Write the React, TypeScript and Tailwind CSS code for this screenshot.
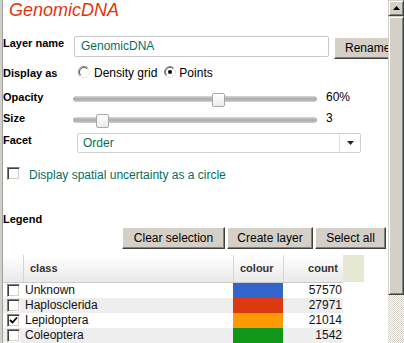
import React from "react";

const btn =
  "bg-[#d4d0c8] border border-t-white border-l-white border-r-[#404040] border-b-[#404040] shadow-[inset_-1px_-1px_0_#808080] text-[12px] text-black";

const sunken =
  "bg-white border border-t-[#808080] border-l-[#808080] border-b-white border-r-white shadow-[inset_1px_1px_0_#404040,inset_-1px_-1px_0_#d4d0c8]";

function Radio({ checked }: { checked?: boolean }) {
  return (
    <svg width="12" height="12" viewBox="0 0 12 12" className="shrink-0">
      <circle cx="6" cy="6" r="5.5" fill="white" />
      <path d="M2.1 9.9 A5.5 5.5 0 0 1 9.9 2.1" stroke="#808080" fill="none" />
      <path d="M2.8 9.2 A4.5 4.5 0 0 1 9.2 2.8" stroke="#404040" fill="none" strokeWidth="0.8" />
      <path d="M9.9 2.1 A5.5 5.5 0 0 1 2.1 9.9" stroke="#e4e4e4" fill="none" />
      {checked && <circle cx="6" cy="6" r="2" fill="black" />}
    </svg>
  );
}

function Check({ checked }: { checked?: boolean }) {
  return (
    <div className={`w-[13px] h-[13px] shrink-0 ${sunken} flex items-center justify-center`}>
      {checked && (
        <svg width="9" height="9" viewBox="0 0 9 9">
          <path d="M1 4 L3.5 6.5 L8 1.5" stroke="black" strokeWidth="1.8" fill="none" />
        </svg>
      )}
    </div>
  );
}

function Slider({ left }: { left: number }) {
  return (
    <div className="relative w-[244px] h-[18px] shrink-0">
      <div className="absolute left-0 right-0 top-[6px] h-[6px] rounded-full bg-linear-to-b from-[#d8d8d8] via-[#a9a9a9] to-[#cfcfcf]" />
      <div
        className="absolute top-[3px] w-[13px] h-[14px] rounded-[2px] border border-[#a8a8a8] bg-linear-to-b from-white to-[#ececec]"
        style={{ left }}
      />
    </div>
  );
}

const rows = [
  { name: "Unknown", color: "bg-[#3366cc]", count: "57570", checked: false, alt: false },
  { name: "Haplosclerida", color: "bg-[#dc3912]", count: "27971", checked: false, alt: true },
  { name: "Lepidoptera", color: "bg-[#ff9900]", count: "21014", checked: true, alt: false },
  { name: "Coleoptera", color: "bg-[#109618]", count: "1542", checked: false, alt: true },
];

export default function App() {
  const teal = "text-[#006f62]";
  return (
    <div className="flex w-[404px] h-[343px] overflow-hidden bg-white font-[family-name:'Liberation_Sans',Arial,sans-serif] text-black">
      {/* left border */}
      <div className="w-[2px] shrink-0 bg-[#d4d0c8]" />
      <div className="w-[1px] shrink-0 bg-[#a0a0a0]" />

      {/* content */}
      <div className="flex flex-col w-[385px] shrink-0 overflow-hidden">
        <div className="h-[20px] leading-[20px] text-[18px] italic text-[#e3330c] pl-[6px]">GenomicDNA</div>

        <div className="mt-[16px] h-[23px] flex items-start">
          <div className="w-[71px] shrink-0 text-[11px] font-bold leading-[14px]">Layer name</div>
          <div className={`w-[255px] h-[21px] shrink-0 border border-[#c8c8c8] rounded-[2px] pl-[6px] text-[12px] leading-[19px] ${teal}`}>
            GenomicDNA
          </div>
          <div className={`ml-[5px] mt-[1px] h-[22px] w-[70px] shrink-0 pl-[10px] leading-[20px] whitespace-nowrap ${btn}`}>
            Rename
          </div>
        </div>

        <div className="mt-[7px] h-[12px] flex items-start">
          <div className="w-[75px] shrink-0 text-[11px] font-bold leading-[14px]">Display as</div>
          <Radio />
          <span className="ml-[4px] text-[12px] leading-[14px]">Density grid</span>
          <span className="ml-[7px]">
            <Radio checked />
          </span>
          <span className="ml-[3px] text-[12px] leading-[14px]">Points</span>
        </div>

        <div className="mt-[12px] h-[18px] flex items-start">
          <div className="w-[70px] shrink-0 text-[11px] font-bold leading-[14px]">Opacity</div>
          <Slider left={139} />
          <span className="ml-[9px] text-[12px] leading-[14px]">60%</span>
        </div>

        <div className="mt-[3px] h-[18px] flex items-start">
          <div className="w-[70px] shrink-0 text-[11px] font-bold leading-[14px]">Size</div>
          <Slider left={23} />
          <span className="ml-[9px] text-[12px] leading-[14px]">3</span>
        </div>

        <div className="mt-[4px] h-[20px] flex items-start">
          <div className="w-[74px] shrink-0 text-[11px] font-bold leading-[14px]">Facet</div>
          <div className="w-[284px] h-[20px] shrink-0 border border-[#cfcfcf] rounded-[2px] flex">
            <div className={`flex-1 pl-[5px] text-[12px] leading-[18px] ${teal}`}>Order</div>
            <div className="w-[21px] border-l border-[#dcdcdc] flex items-center justify-center">
              <svg width="7" height="4" viewBox="0 0 7 4">
                <path d="M0 0 H7 L3.5 4 Z" fill="#222" />
              </svg>
            </div>
          </div>
        </div>

        <div className="mt-[14px] h-[13px] flex items-start">
          <div className="ml-[4px]">
            <Check />
          </div>
          <span className={`ml-[9px] mt-[1px] text-[12px] leading-[14px] whitespace-nowrap ${teal}`}>
            Display spatial uncertainty as a circle
          </span>
        </div>

        <div className="mt-[32px] h-[14px] text-[11px] font-bold leading-[14px]">Legend</div>

        <div className="mt-[1px] h-[22px] flex justify-end gap-[2px] pr-[2px]">
          <div className={`w-[103px] h-[22px] text-center leading-[20px] ${btn}`}>Clear selection</div>
          <div className={`w-[86px] h-[22px] text-center leading-[20px] ${btn}`}>Create layer</div>
          <div className={`w-[71px] h-[22px] text-center leading-[20px] ${btn}`}>Select all</div>
        </div>

        <div className="mt-[6px] flex">
          <div className="w-[340px] h-[28px] flex border-b border-[#cacaca] bg-linear-to-b from-white to-[#e9e9e9] text-[11px] font-bold text-[#333]">
            <div className="w-[20px]" />
            <div className="w-[210px] border-l border-[#d6d6d6] pl-[6px] flex items-center">class</div>
            <div className="w-[50px] border-l border-[#d6d6d6] pl-[6px] flex items-center">colour</div>
            <div className="w-[60px] border-l border-[#d6d6d6] pr-[5px] flex items-center justify-end">count</div>
          </div>
          <div className="w-[21px] h-[27px] bg-[#e6e8d3]" />
        </div>

        {rows.map((r) => (
          <div key={r.name} className={`w-[340px] h-[15px] flex items-center text-[12px] leading-[15px] text-[#111] ${r.alt ? "bg-[#eeeeee]" : "bg-white"}`}>
            <div className="w-[20px] pl-[4px] flex items-center">
              <Check checked={r.checked} />
            </div>
            <div className="w-[210px] pl-[2px]">{r.name}</div>
            <div className={`w-[50px] h-[15px] ${r.color}`} />
            <div className="w-[60px] text-right pr-[1px]">{r.count}</div>
          </div>
        ))}
      </div>

      {/* scrollbar */}
      <div className="w-[16px] shrink-0 flex flex-col">
        <div className="h-[16px] bg-[#d4d0c8] border border-t-[#d4d0c8] border-l-[#d4d0c8] border-b-[#404040] border-r-[#404040] shadow-[inset_1px_1px_0_#fff,inset_-1px_-1px_0_#808080] flex items-center justify-center">
          <svg width="7" height="4" viewBox="0 0 7 4">
            <path d="M3.5 0 L7 4 H0 Z" fill="black" />
          </svg>
        </div>
        <div className="h-[279px] bg-[#d4d0c8] border border-t-[#d4d0c8] border-l-[#d4d0c8] border-b-[#404040] border-r-[#404040] shadow-[inset_1px_1px_0_#fff,inset_-1px_-1px_0_#808080]" />
        <div className="flex-1 bg-[image:repeating-conic-gradient(#d4d0c8_0_25%,#ffffff_0_50%)] bg-[length:2px_2px]" />
      </div>
    </div>
  );
}
